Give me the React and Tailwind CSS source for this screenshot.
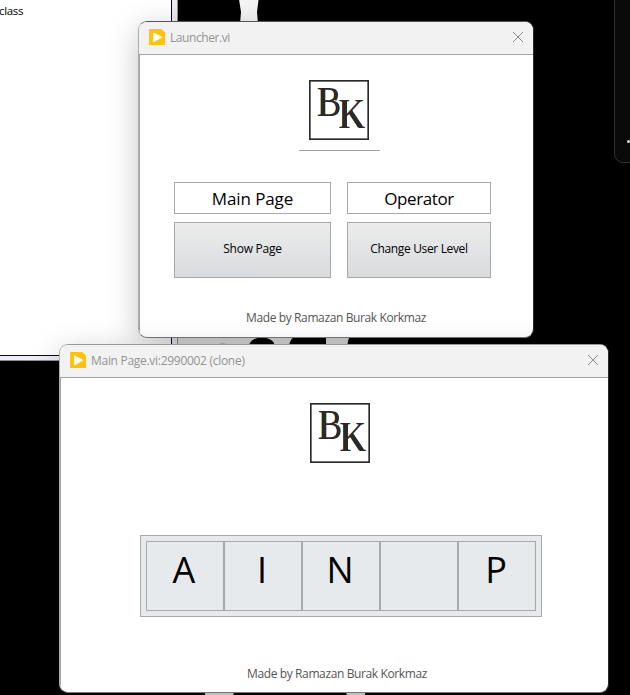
import React from "react";

function Logo() {
  return (
    <svg width="60" height="60" viewBox="0 0 60 60" className="block shrink-0">
      <rect x="0.8" y="0.8" width="58.4" height="58.4" fill="#fff" stroke="#2b2a2a" strokeWidth="1.7" />
      <g fill="#2b2a2a" fontFamily="'Liberation Serif', serif" fontSize="42">
        <text x="7.8" y="36" textLength="24.500" lengthAdjust="spacingAndGlyphs">B</text>
        <text x="29.3" y="48" textLength="27" lengthAdjust="spacingAndGlyphs">K</text>
      </g>
      <path d="M11.8 9H16.3V35.5H11.8ZM33.300 21H38V47.500H33.300ZM39.500 33L43 30L54 46.500L49 47.500Z" fill="#2b2a2a" />
      <path d="M26 11.500Q29 15 26 20M27 23.500Q30.500 28 27 33" fill="none" stroke="#2b2a2a" strokeWidth="3" />
    </svg>
  );
}

function TitleBar({ title, tracking }) {
  return (
    <div className="flex h-[33px] shrink-0 items-center border-b border-[#a2a4a6] bg-[#f2f2f2] pr-[9px] pl-2.5">
      <svg width="16" height="16" viewBox="0 0 16 16" className="mr-[5px] -mt-0.5 shrink-0">
        <path d="M0 0H12.5L16 3.5V16H0Z" fill="#ffc30f" />
        <path d="M4.8 4.2L12.3 8.3L4.8 12.4Z" fill="#fff" stroke="#fff" strokeWidth="1.2" strokeLinejoin="round" />
      </svg>
      <span className={"-mt-px flex-1 whitespace-nowrap text-xs text-[#929292] " + tracking}>{title}</span>
      <svg width="12" height="12" viewBox="0 0 12 12" className="-mt-[3px] shrink-0">
        <path d="M1 1L11 11M11 1L1 11" stroke="#8c8c8c" strokeWidth="1" fill="none" />
      </svg>
    </div>
  );
}

function Footer() {
  return <div className="whitespace-nowrap text-center text-xs leading-4 tracking-[-0.38px] text-[#555]">Made by Ramazan Burak Korkmaz</div>;
}

function Backdrop() {
  return (
    <>
      <svg className="absolute inset-0" width="630" height="695" viewBox="0 0 630 695">
        <defs>
          <filter id="soft" x="-20%" y="-20%" width="140%" height="140%"><feGaussianBlur stdDeviation="0.7" /></filter>
        </defs>
        <g filter="url(#soft)">
          <path d="M238.500 -4L241 12L240 24H258L257 12L259 -4Z" fill="#f4f4f4" />
          <path d="M177 334H351Q348 338 347 348H177Z" fill="#e6e6e6" />
          <path d="M249 346Q250 338 262 337.500Q274 338 275 346Z" fill="#000" />
          <path d="M289 346Q290 339 295 336H326V346Z" fill="#000" />
          <path d="M211 346Q220 342 232 345Z" fill="#222" />
          <path d="M204 689H234L233 699H206ZM345 689H366L364 699H348Z" fill="#e0e0e0" />
        </g>
      </svg>
      <div className="absolute -top-px -left-px h-[362px] w-[179px] border-r border-b border-[#8e9196] bg-[#eeedf3]">
        <div className="h-[357px] w-[173px] overflow-hidden border-r border-b border-[#090a15] bg-white text-[11.500px] leading-4 text-black">
          <div className="mt-1 whitespace-nowrap tracking-[-0.35px]">class</div>
        </div>
      </div>
      <div className="absolute -top-5 left-[614px] h-[183px] w-10 rounded-[9px] border border-[#303030] bg-[#0a0a0a]">
        <div className="mt-[159px] ml-3 h-[3px] w-[3px] rounded-full bg-[#ddd]" />
      </div>
    </>
  );
}

function LauncherWindow() {
  return (
    <div className="absolute top-[21px] left-[138px] flex h-[317px] w-[396px] flex-col overflow-hidden rounded-[9px] border border-[#adadad] border-t-[#555] border-r-[#292929] border-b-[#777] bg-white shadow-[0_8px_32px_rgba(0,0,0,0.22)]">
      <TitleBar title="Launcher.vi" tracking="tracking-[-0.42px]" />
      <div className="flex flex-1 flex-col border-l border-[#a2a4a6] pt-[25px] pl-[34px]">
        <div className="flex w-[330px] flex-col items-center">
          <Logo />
          <div className="mt-2.5 h-px w-[81px] bg-[#a0a2a8]" />
        </div>
        <div className="mt-[31px] grid grid-cols-[157px_144px] grid-rows-[32px_56px] gap-x-4 gap-y-2 text-black">
          <div className="flex items-center justify-center border border-[#a6a8ab] text-[17px] leading-none tracking-[-0.1px] whitespace-nowrap">Main Page</div>
          <div className="flex items-center justify-center border border-[#a6a8ab] text-[17px] leading-none tracking-[-0.4px] whitespace-nowrap">Operator</div>
          <button className="flex items-center justify-center border border-[#a6a8ab] bg-linear-to-b from-[#ebeceb] to-[#dadbde] pb-0.5 text-xs whitespace-nowrap tracking-[-0.25px]">Show Page</button>
          <button className="flex items-center justify-center border border-[#a6a8ab] bg-linear-to-b from-[#ebeceb] to-[#dadbde] pb-0.5 text-xs whitespace-nowrap tracking-[-0.35px]">Change User Level</button>
        </div>
        <div className="mt-8 w-[324px]"><Footer /></div>
      </div>
    </div>
  );
}

const cells = ["A", "I", "N", "", "P"];

function MainPageWindow() {
  return (
    <div className="absolute top-[344px] left-[59px] flex h-[349px] w-[550px] flex-col overflow-hidden rounded-[9px] border border-[#adadad] border-t-[#999] border-r-[#292929] border-b-[#777] bg-white shadow-[0_8px_32px_rgba(0,0,0,0.22)]">
      <TitleBar title="Main Page.vi:2990002 (clone)" tracking="tracking-[-0.29px]" />
      <div className="flex flex-1 flex-col border-l border-[#a2a4a6] pt-[25px]">
        <div className="flex w-[558px] justify-center"><Logo /></div>
        <div className="mt-[72px] ml-[79px] flex h-[82px] w-[402px] border border-[#a6aaab] bg-[#e6eaed] p-[5px]">
          {cells.map((letter, i) => (
            <div key={i} className="flex h-[70px] w-[78px] justify-center border border-[#a6aaab] pt-[9px] pr-0.5 text-[36px] leading-[38px] text-black">{letter}</div>
          ))}
        </div>
        <div className="mt-[49px] w-[552px]"><Footer /></div>
      </div>
    </div>
  );
}

export default function App() {
  return (
    <main className="relative h-[695px] w-[630px] overflow-hidden bg-black font-['Open_Sans','Noto_Sans',sans-serif]">
      <Backdrop />
      <LauncherWindow />
      <MainPageWindow />
    </main>
  );
}
